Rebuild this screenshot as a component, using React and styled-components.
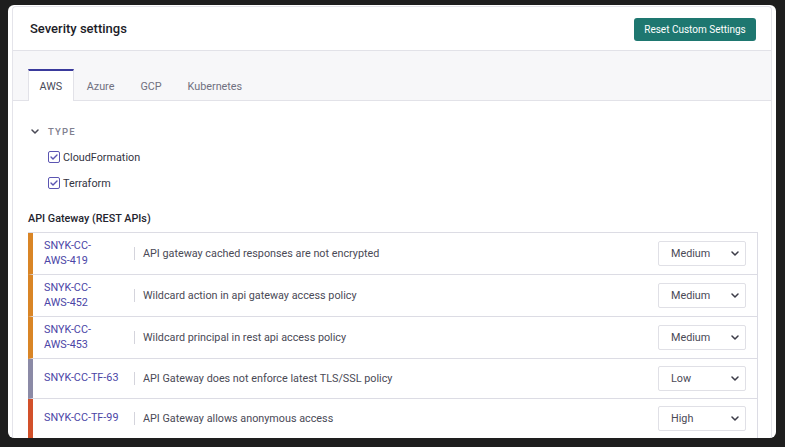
import React from "react";
import styled, { createGlobalStyle } from "styled-components";

const GlobalStyle = createGlobalStyle`
  body {
    margin: 0;
    background: #1e1e1e;
    font-family: Roboto, "Liberation Sans", Arial, sans-serif;
  }
  * {
    box-sizing: border-box;
  }
`;

const Page = styled.div`
  height: 447px;
  padding: 5px 9px 9px 8px;
  display: flex;
`;
const Panel = styled.div`
  flex: 1;
  background: #ffffff;
  border-radius: 6px;
  padding: 1px 4px 0 4px;
  display: flex;
  overflow: hidden;
`;
const Inner = styled.div`
  flex: 1;
  border: 1px solid #e4e4ea;
  border-bottom: none;
  border-radius: 4px 4px 0 0;
  display: flex;
  flex-direction: column;
  overflow: hidden;
`;
const Header = styled.div`
  height: 44px;
  flex-shrink: 0;
  border-bottom: 1px solid #e2e2e8;
  display: flex;
  align-items: center;
  justify-content: space-between;
  padding: 0 15px 0 17px;
`;
const Title = styled.h1`
  margin: 0;
  font-size: 13px;
  font-weight: 500;
  color: #1c1c28;
`;
const ResetButton = styled.button`
  height: 23px;
  width: 122px;
  padding: 0;
  border: none;
  border-radius: 3px;
  background: #1e7770;
  color: #ffffff;
  font-family: inherit;
  font-size: 10px;
  margin-top: 2px;
`;
const TabBar = styled.div`
  height: 50px;
  flex-shrink: 0;
  background: #f7f7f9;
  border-bottom: 1px solid #e2e2e8;
  display: flex;
  align-items: flex-end;
  padding-left: 15px;
`;
const Tab = styled.div`
  height: 32px;
  margin-bottom: -1px;
  padding: 0 ${(p) => (p.$active ? "10.5px" : "12px")};
  display: flex;
  align-items: center;
  font-size: 10.8px;
  color: ${(p) => (p.$active ? "#4a4a58" : "#707080")};
  background: ${(p) => (p.$active ? "#ffffff" : "transparent")};
  border-top: 2px solid ${(p) => (p.$active ? "#3a3a9c" : "transparent")};
  border-left: 1px solid ${(p) => (p.$active ? "#e2e2e8" : "transparent")};
  border-right: 1px solid ${(p) => (p.$active ? "#e2e2e8" : "transparent")};
`;
const Content = styled.div`
  flex: 1;
  padding: 0 13px 0 15px;
`;
const TypeToggle = styled.div`
  margin-top: 22px;
  height: 16px;
  display: flex;
  align-items: center;
  gap: 9px;
  padding-left: 3px;
  font-size: 9.5px;
  font-weight: 500;
  letter-spacing: 1.2px;
  color: #80808f;
`;
const CheckRow = styled.label`
  height: 26px;
  display: flex;
  align-items: center;
  gap: 3px;
  padding-left: 20px;
  font-size: 10.8px;
  color: #34343f;
  &:first-of-type {
    margin-top: 5px;
  }
`;
const Box = styled.span`
  width: 12px;
  height: 12px;
  border: 1px solid #5b55b2;
  border-radius: 2px;
  display: flex;
  align-items: center;
  justify-content: center;
`;
const GroupTitle = styled.h2`
  margin: 15px 0 0 0;
  font-size: 10.8px;
  font-weight: 500;
  line-height: 16px;
  color: #24242e;
`;
const Table = styled.div`
  margin-top: 5px;
  border-top: 1px solid #dcdce4;
  border-right: 1px solid #dcdce4;
`;
const Row = styled.div`
  display: flex;
  align-items: center;
  min-height: 40px;
  padding: 6px 11px 6px 11px;
  border-left: 5px solid ${(p) => p.$color};
  border-bottom: 1px solid #dcdce4;
`;
const RuleId = styled.a`
  width: 80px;
  flex-shrink: 0;
  font-size: 10.8px;
  line-height: 14.5px;
  color: #4b45a6;
  text-decoration: none;
`;
const NoWrap = styled.span`
  white-space: nowrap;
`;
const Separator = styled.span`
  width: 1px;
  height: 13px;
  background: #d4d4dc;
  margin: 0 8px 0 10px;
  flex-shrink: 0;
`;
const Description = styled.span`
  flex: 1;
  font-size: 10.8px;
  color: #4a4a56;
`;
const Select = styled.div`
  width: 88px;
  height: 25px;
  border: 1px solid #e0e0e6;
  border-radius: 2px;
  display: flex;
  align-items: center;
  justify-content: space-between;
  padding: 0 6px 0 12px;
  font-size: 10.8px;
  color: #4a4a56;
`;

const Chevron = ({ color = "#3c3c48" }) => (
  <svg width="8" height="5" viewBox="0 0 8 5" fill="none">
    <path d="M1 1l3 3 3-3" stroke={color} strokeWidth="1.5" strokeLinecap="round" strokeLinejoin="round" />
  </svg>
);

const Check = () => (
  <Box>
    <svg width="8" height="6" viewBox="0 0 8 6" fill="none">
      <path d="M1 3l2 2 4-4" stroke="#5b55b2" strokeWidth="1.4" strokeLinecap="round" strokeLinejoin="round" />
    </svg>
  </Box>
);

const rules = [
  { id: "AWS-419", text: "API gateway cached responses are not encrypted", level: "Medium", color: "#d98526" },
  { id: "AWS-452", text: "Wildcard action in api gateway access policy", level: "Medium", color: "#d98526" },
  { id: "AWS-453", text: "Wildcard principal in rest api access policy", level: "Medium", color: "#d98526" },
  { id: "TF-63", text: "API Gateway does not enforce latest TLS/SSL policy", level: "Low", color: "#8b8aa6" },
  { id: "TF-99", text: "API Gateway allows anonymous access", level: "High", color: "#d2502a" },
  { id: "TF-100", text: "API Gateway stage does not have logging enabled", level: "Low", color: "#8b8aa6" },
];

export default function App() {
  return (
    <Page>
      <GlobalStyle />
      <Panel>
        <Inner>
          <Header>
            <Title>Severity settings</Title>
            <ResetButton>Reset Custom Settings</ResetButton>
          </Header>
          <TabBar>
            <Tab $active>AWS</Tab>
            <Tab>Azure</Tab>
            <Tab>GCP</Tab>
            <Tab>Kubernetes</Tab>
          </TabBar>
          <Content>
            <TypeToggle>
              <Chevron color="#4a4a56" />
              TYPE
            </TypeToggle>
            <CheckRow>
              <Check />
              CloudFormation
            </CheckRow>
            <CheckRow>
              <Check />
              Terraform
            </CheckRow>
            <GroupTitle>API Gateway (REST APIs)</GroupTitle>
            <Table>
              {rules.map((r) => (
                <Row key={r.id} $color={r.color}>
                  <RuleId href="#">
                    SNYK-CC-<NoWrap>{r.id}</NoWrap>
                  </RuleId>
                  <Separator />
                  <Description>{r.text}</Description>
                  <Select>
                    {r.level}
                    <Chevron />
                  </Select>
                </Row>
              ))}
            </Table>
          </Content>
        </Inner>
      </Panel>
    </Page>
  );
}
